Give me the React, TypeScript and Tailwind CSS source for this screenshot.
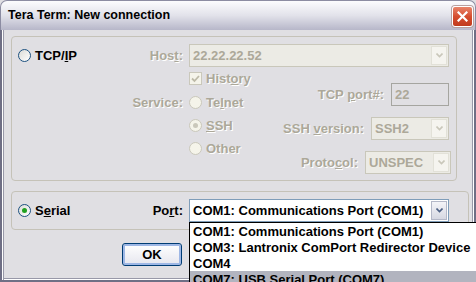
import React from 'react';

const FONT = "font-['Liberation_Sans',Arial,sans-serif]";
const DIS = 'text-[#aca899] [text-shadow:1px_1px_0_#ffffff]';

const Radio: React.FC<{ checked?: boolean; disabled?: boolean }> = ({ checked, disabled }) => (
    <span
        className={`w-[13px] h-[13px] rounded-full border flex items-center justify-center shrink-0 ${
            disabled ? 'border-[#cac8bb] bg-[#f5f4ea]' : 'border-[#1c5180] bg-gradient-to-br from-[#dcdcd7] to-white'
        }`}
    >
        {checked && (
            <span className={`w-[5px] h-[5px] rounded-full ${disabled ? 'bg-[#cac8bb]' : 'bg-[#21a121]'}`}></span>
        )}
    </span>
);

const Chevron: React.FC<{ color: string }> = ({ color }) => (
    <svg width="7" height="5" viewBox="0 0 7 5">
        <path d="M0.5 0.5 L3.5 3.5 L6.5 0.5" fill="none" stroke={color} strokeWidth="1.6" />
    </svg>
);

const DisabledCombo: React.FC<{ value: string; w: string }> = ({ value, w }) => (
    <div className={`${w} h-[23px] border border-[#c9c7ba] bg-[#ecebe5] flex items-center`}>
        <span className="flex-1 pl-[3px] text-[#aca899]">{value}</span>
        <span className="w-[16px] h-[19px] mr-[1px] bg-[#f5f4ef] border border-[#e2e1d8] flex items-center justify-center">
            <Chevron color="#c9c7ba" />
        </span>
    </div>
);

export default function App() {
    return (
        <div className={`w-[476px] h-[282px] relative overflow-hidden bg-[#e0dfe3] text-[13px] font-bold leading-none ${FONT}`}>
            <div className="h-full flex flex-col rounded-t-[7px] bg-[#e0dfe3]">
                {/* Title bar */}
                <div className="h-[30px] rounded-t-[7px] bg-gradient-to-b from-[#fcfcfe] via-[#e2e2ea] to-[#b7b7c9] flex items-center pl-[7px] pr-[2px] border border-b-0 border-[#8c8ca2]">
                    <span className="flex-1 text-[12.5px] text-black">Tera Term: New connection</span>
                    <span className="w-[21px] h-[21px] mt-[2px] rounded-[3px] border border-white bg-gradient-to-b from-[#e8846a] via-[#d54d2f] to-[#c13a1d] flex items-center justify-center shadow-[0_0_0_1px_#b8a0a0]">
                        <svg width="11" height="11" viewBox="0 0 11 11">
                            <path d="M1.5 1.5 L9.5 9.5 M9.5 1.5 L1.5 9.5" stroke="#ffffff" strokeWidth="2.2" strokeLinecap="square" />
                        </svg>
                    </span>
                </div>

                {/* Body */}
                <div className="flex-1 flex flex-col pl-[9px] pt-[6px] border-x-2 border-b-2 border-[#6f6f85] shadow-[inset_1px_0_0_#ffffff,inset_2px_0_0_#9898a8,inset_-1px_0_0_#ffffff,inset_-2px_0_0_#9898a8,inset_0_-1px_0_#ffffff,inset_0_-2px_0_#9898a8]">
                    {/* TCP/IP group */}
                    <div className="w-[446px] h-[145px] border border-[#c5c2b8] rounded-[4px] pt-[7px] flex flex-col">
                        <div className="h-[23px] flex items-center">
                            <div className="w-[171px] flex items-center justify-between pl-[6px]">
                                <span className="flex items-center gap-[4px]">
                                    <Radio />
                                    <span className="text-black">TCP/<u>I</u>P</span>
                                </span>
                                <span className={DIS}>Hos<u>t</u>:</span>
                            </div>
                            <div className="ml-[6px]">
                                <DisabledCombo value="22.22.22.52" w="w-[260px]" />
                            </div>
                        </div>
                        <div className="flex">
                            <div className="w-[171px] flex flex-col">
                                <div className="h-[23px]"></div>
                                <div className={`h-[24px] flex items-center justify-end ${DIS}`}>Service:</div>
                            </div>
                            <div className="ml-[6px] flex flex-col">
                                <div className="h-[23px] flex items-center gap-[4px]">
                                    <span className="w-[13px] h-[13px] border border-[#cac8bb] bg-[#f5f4ea] flex items-center justify-center">
                                        <svg width="9" height="9" viewBox="0 0 9 9">
                                            <path d="M1 4.5 L3.5 7 L8 2" fill="none" stroke="#bdbaa8" strokeWidth="1.8" />
                                        </svg>
                                    </span>
                                    <span className={DIS}>Hist<u>o</u>ry</span>
                                </div>
                                <div className="h-[24px] flex items-center gap-[4px]">
                                    <Radio disabled />
                                    <span className={DIS}>Te<u>l</u>net</span>
                                </div>
                                <div className="h-[23px] flex items-center gap-[4px]">
                                    <Radio disabled checked />
                                    <span className={DIS}><u>S</u>SH</span>
                                </div>
                                <div className="h-[23px] flex items-center gap-[4px]">
                                    <Radio disabled />
                                    <span className={DIS}>Other</span>
                                </div>
                            </div>
                            <div className="flex-1 flex flex-col items-end pr-[7px]">
                                <div className="mt-[16px] h-[23px] flex items-center gap-[7px]">
                                    <span className={DIS}>TCP <u>p</u>ort#:</span>
                                    <div className="w-[58px] h-[23px] border border-[#a5a5a0] flex items-center pl-[3px] text-[#aca899]">22</div>
                                </div>
                                <div className="mt-[11px] h-[22px] flex items-center gap-[7px]">
                                    <span className={DIS}>SSH <u>v</u>ersion:</span>
                                    <DisabledCombo value="SSH2" w="w-[78px]" />
                                </div>
                                <div className="mt-[12px] h-[22px] flex items-center gap-[7px] mr-[-2px]">
                                    <span className={DIS}>Proto<u>c</u>ol:</span>
                                    <DisabledCombo value="UNSPEC" w="w-[86px]" />
                                </div>
                            </div>
                        </div>
                    </div>

                    {/* Serial group */}
                    <div className="mt-[10px] w-[458px] h-[39px] border border-[#c5c2b8] rounded-[4px] pt-[7px]">
                        <div className="h-[23px] flex items-center">
                            <div className="w-[171px] flex items-center justify-between pl-[6px]">
                                <span className="flex items-center gap-[4px]">
                                    <Radio checked />
                                    <span className="text-black">S<u>e</u>rial</span>
                                </span>
                                <span className="text-black">Po<u>r</u>t:</span>
                            </div>
                            <div className="ml-[6px] w-[260px] h-[23px] border border-[#7f9db9] bg-white flex items-center">
                                <span className="flex-1 pl-[3px] text-black">COM1: Communications Port (COM1)</span>
                                <span className="w-[16px] h-[19px] mr-[1px] bg-gradient-to-b from-[#f4f4f8] to-[#d6d8e2] border border-[#b4b8c8] flex items-center justify-center">
                                    <Chevron color="#4d6185" />
                                </span>
                            </div>
                        </div>
                    </div>

                    <div className="mt-[13px] ml-[111px]">
                        <button className="w-[60px] h-[23px] rounded-[3px] border border-[#003c74] bg-gradient-to-b from-white to-[#e6e6ee] shadow-[inset_0_0_0_2px_#9eb7e5] text-black text-[13px] font-bold">
                            OK
                        </button>
                    </div>
                </div>
            </div>

            {/* Open dropdown list */}
            <div className="absolute left-[189px] top-[222px] w-[300px] h-[70px] bg-white border border-black text-black">
                <div className="h-[16px] flex items-center pl-[3px]">COM1: Communications Port (COM1)</div>
                <div className="h-[16px] flex items-center pl-[3px]">COM3: Lantronix ComPort Redirector Device</div>
                <div className="h-[16px] flex items-center pl-[3px]">COM4</div>
                <div className="h-[16px] flex items-center pl-[3px] bg-[#b2b4bf]">COM7: USB Serial Port (COM7)</div>
            </div>
        </div>
    );
}
